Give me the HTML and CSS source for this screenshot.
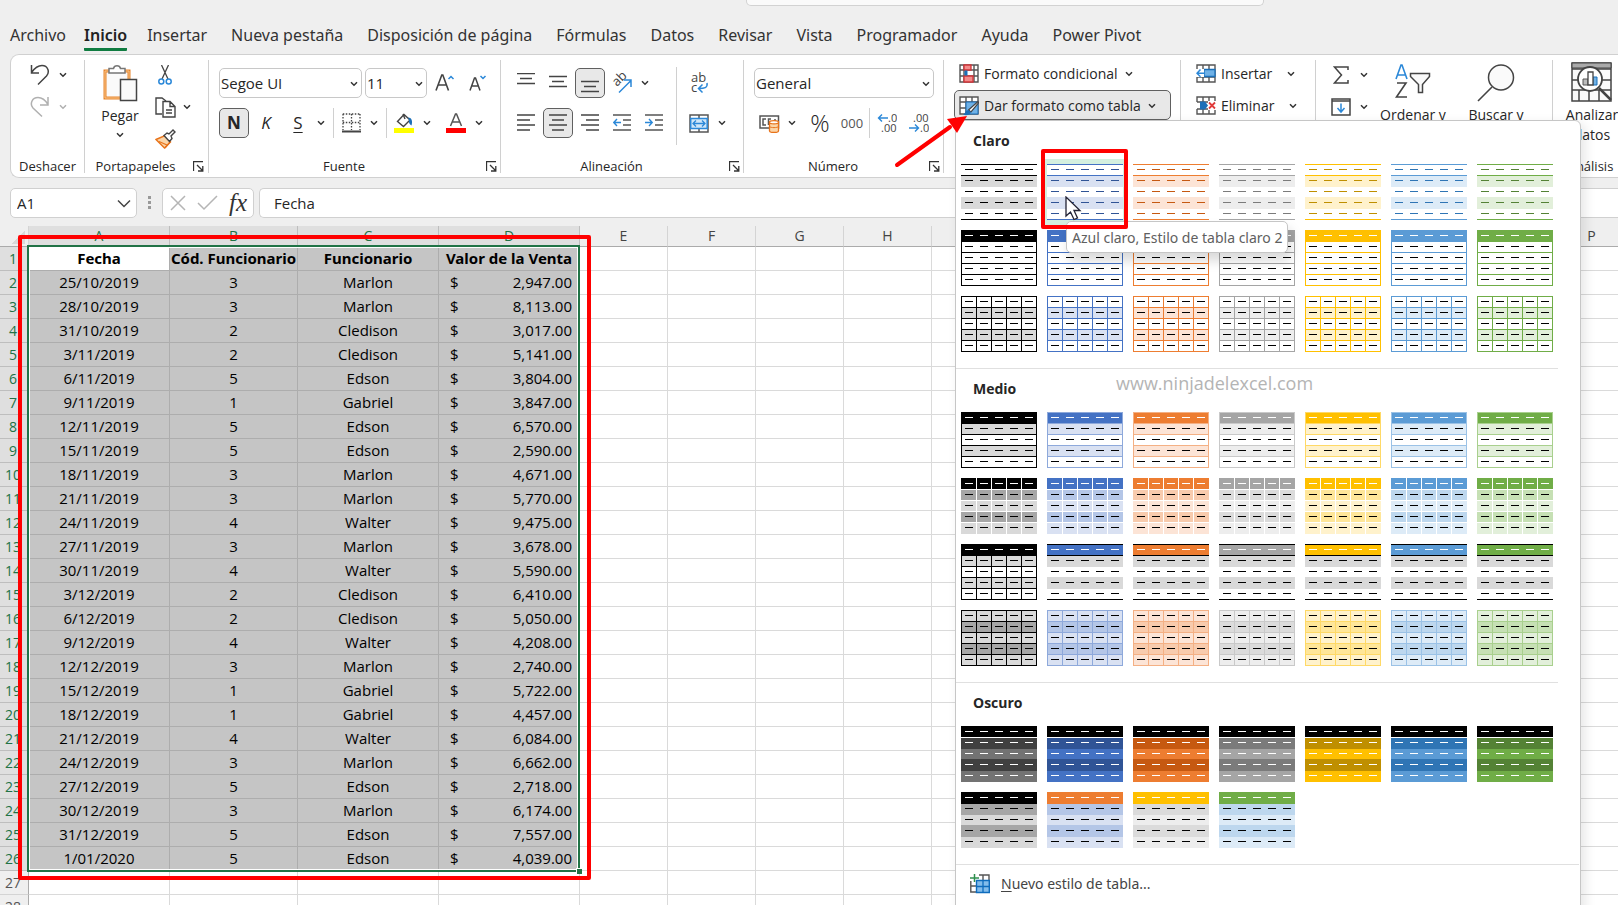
FILE: index.html
```html
<!DOCTYPE html>
<html lang="es">
<head>
<meta charset="utf-8">
<title>Excel - Dar formato como tabla</title>
<link rel="stylesheet" href="styles.css">
</head>
<body>
<svg class="defs" aria-hidden="true">
  <symbol id="chev" viewBox="0 0 8 6"><path d="M1 1.2 4 4.2 7 1.2" fill="none" stroke="currentColor" stroke-width="1.5"/></symbol>
  <symbol id="launch" viewBox="0 0 11 11"><path d="M.5 10V.5H10M4 4l5.500 5.500M9.800 5v5H5" fill="none" stroke="#333" stroke-width="1.300"/></symbol>
</svg>
<div class="app">
  <header class="titlebar"><div class="searchbox"></div></header>
  <nav class="tabs" aria-label="Cinta de opciones">
    <a class="tab tab-file" href="#">Archivo</a>
    <a class="tab is-active" href="#">Inicio</a>
    <a class="tab" href="#">Insertar</a>
    <a class="tab" href="#">Nueva pestaña</a>
    <a class="tab" href="#">Disposición de página</a>
    <a class="tab" href="#">Fórmulas</a>
    <a class="tab" href="#">Datos</a>
    <a class="tab" href="#">Revisar</a>
    <a class="tab" href="#">Vista</a>
    <a class="tab" href="#">Programador</a>
    <a class="tab" href="#">Ayuda</a>
    <a class="tab" href="#">Power Pivot</a>
  </nav>

  <div class="ribbon">
    <section class="group g-undo">
      <div class="stack">
        <div class="row"><button class="ib" aria-label="Deshacer"><svg width="20" height="22" viewBox="0 0 20 22"><path d="M1.500 1v8H9M1.500 8.500C5 3.500 9 1.500 12 1.500c6 0 8 6.500 4.500 10.500L8 20.500" fill="none" stroke="#444" stroke-width="1.500"/></svg></button><button class="cb" aria-label="Más"><svg class="chev"><use href="#chev"/></svg></button></div>
        <div class="row is-off"><button class="ib" aria-label="Rehacer"><svg width="20" height="22" viewBox="0 0 20 22"><path d="M18 1v8h-8M18 8.500C15 3.500 11 1.500 8 1.500c-6 0-8.500 6.500-5 10.500l9 8.500" fill="none" stroke="#b0b0b0" stroke-width="1.500"/></svg></button><button class="cb" aria-label="Más"><svg class="chev"><use href="#chev"/></svg></button></div>
      </div>
      <footer class="foot"><span>Deshacer</span></footer>
    </section>

    <section class="group g-clip">
      <div class="cols">
        <button class="big">
          <svg width="35" height="38" viewBox="0 0 35 38"><path d="M2 7h24v27H2z" fill="#fafafa" stroke="#e8842b" stroke-width="3"/><path d="M2 7h24v27H2z" fill="none" stroke="#f8c58a" stroke-width="1"/><path d="M6 9V4.500h4.500a3.600 3.600 0 0 1 7 0H22V9z" fill="#fff" stroke="#777" stroke-width="1.500"/><path d="M17.500 15.500h16v21h-16z" fill="#fafafa" stroke="#444" stroke-width="1.500"/></svg>
          <span>Pegar</span>
          <svg class="chev"><use href="#chev"/></svg>
        </button>
        <div class="stack tight">
          <div class="row"><button class="ib" aria-label="Cortar"><svg width="14" height="20" viewBox="0 0 14 20"><path d="M3.500 0l6.500 14M10.500 0L4 14" stroke="#444" stroke-width="1.300"/><circle cx="3.300" cy="16.500" r="2.500" fill="none" stroke="#2b88d8" stroke-width="1.500"/><circle cx="10.700" cy="16.500" r="2.500" fill="none" stroke="#2b88d8" stroke-width="1.500"/></svg></button></div>
          <div class="row"><button class="ib" aria-label="Copiar"><svg width="21" height="21" viewBox="0 0 21 21"><path d="M7 17H1V1h6l4 3" fill="none" stroke="#444" stroke-width="1.400"/><path d="M8 4.500h7l5 5V20H8zM15 4.500v5h5M11 13h6M11 16h6" fill="#fff" stroke="#444" stroke-width="1.400"/></svg></button><button class="cb" aria-label="Más"><svg class="chev"><use href="#chev"/></svg></button></div>
          <div class="row"><button class="ib" aria-label="Copiar formato"><svg width="21" height="20" viewBox="0 0 21 20"><path d="M1 10.500l9-4 5.500 6.500-6 6z" fill="#fbd5a8" stroke="#e8731a" stroke-width="1.400"/><path d="M4 12.500l8 3.500M10 19l5-6" stroke="#e8731a" stroke-width="1.200"/><path d="M9 6.500l3-2.500 2 1 4-4 2 2-4 4 1 2.500-2.500 3z" fill="#fff" stroke="#444" stroke-width="1.400"/></svg></button></div>
        </div>
      </div>
      <footer class="foot"><span>Portapapeles</span><button class="lb" aria-label="Portapapeles"><svg width="11" height="11"><use href="#launch"/></svg></button></footer>
    </section>

    <section class="group g-font">
      <div class="stack">
        <div class="row r3">
          <div class="combo c-font"><select aria-label="Fuente"><option>Segoe UI</option></select><svg class="chev"><use href="#chev"/></svg></div>
          <div class="combo c-size"><select aria-label="Tamaño"><option>11</option></select><svg class="chev"><use href="#chev"/></svg></div>
          <button class="ib" aria-label="Aumentar tamaño"><svg width="20" height="19" viewBox="0 0 20 19"><path d="M1 16.500L6.800 1h1L13.500 16.500M3 11h8.500" fill="none" stroke="#444" stroke-width="1.600"/><path d="M13.500 5l2.500-2.500L18.500 5" fill="none" stroke="#2b88d8" stroke-width="1.500"/></svg></button>
          <button class="ib" aria-label="Disminuir tamaño"><svg width="18" height="19" viewBox="0 0 18 19"><path d="M1 16.500L5.500 4h1L11 16.500M2.500 12h7" fill="none" stroke="#444" stroke-width="1.500"/><path d="M11.500 2L14 4.500 16.500 2" fill="none" stroke="#2b88d8" stroke-width="1.500"/></svg></button>
        </div>
        <div class="row r2">
          <button class="ib is-on glyph bold">N</button><button class="ib glyph ital">K</button>
          <div class="split"><button class="ib glyph under">S</button><button class="cb" aria-label="Más"><svg class="chev"><use href="#chev"/></svg></button></div>
          <i class="vs"></i>
          <div class="split"><button class="ib" aria-label="Bordes"><svg width="19" height="20" viewBox="0 0 19 20"><path d="M.8 1H18.500M.8 9.500H18.500M1 1V17M9.500 1V17M18 1V17" stroke="#444" stroke-width="1.300" stroke-dasharray="1.500 1.500"/><path d="M0 18.500h19" stroke="#444" stroke-width="2"/></svg></button><button class="cb" aria-label="Más"><svg class="chev"><use href="#chev"/></svg></button></div>
          <i class="vs"></i>
          <div class="split"><button class="ib" aria-label="Relleno"><svg width="20" height="20" viewBox="0 0 20 20"><path d="M3.500 8.500L10 1.500l6 5.500-6.500 6.500zM9 1l2 5" fill="#fff" stroke="#444" stroke-width="1.400"/><path d="M14 4.500c3.500 0 5 3.500 3.500 8-2-1-3-3-2.500-5.500z" fill="#1b6fb8"/><path d="M0 15h20v5H0z" fill="#ff0"/></svg></button><button class="cb" aria-label="Más"><svg class="chev"><use href="#chev"/></svg></button></div>
          <div class="split"><button class="ib" aria-label="Color de fuente"><svg width="20" height="20" viewBox="0 0 20 20"><path d="M4.500 13L9.500 1h1l5 12M6.500 9h7" fill="none" stroke="#555" stroke-width="1.500"/><path d="M0 15h20v5H0z" fill="red"/></svg></button><button class="cb" aria-label="Más"><svg class="chev"><use href="#chev"/></svg></button></div>
        </div>
      </div>
      <footer class="foot"><span>Fuente</span><button class="lb" aria-label="Fuente"><svg width="11" height="11"><use href="#launch"/></svg></button></footer>
    </section>

    <section class="group g-align">
      <div class="cols">
        <div class="stack">
          <div class="row r2">
            <button class="ib" aria-label="Alinear arriba"><svg width="19" height="20"><path d="M0 .5h18M3 5.500h12M0 10.500h18" stroke="#444" stroke-width="1.500"/></svg></button>
            <button class="ib" aria-label="Alinear en medio"><svg width="19" height="20"><path d="M0 3.500h18M3 8.500h12M0 13.500h18" stroke="#444" stroke-width="1.500"/></svg></button>
            <button class="ib is-on" aria-label="Alinear abajo"><svg width="19" height="20"><path d="M0 8.500h18M3 13.500h12M0 18.500h18" stroke="#444" stroke-width="1.500"/></svg></button>
            <div class="split"><button class="ib" aria-label="Orientación"><svg width="22" height="22" viewBox="0 0 22 22"><text x="0" y="0" class="svgtext" font-size="13" transform="translate(6 15) rotate(-45)">ab</text><path d="M8 20.500L19.500 9M13 8h7v7" fill="none" stroke="#2b88d8" stroke-width="1.500"/></svg></button><button class="cb" aria-label="Más"><svg class="chev"><use href="#chev"/></svg></button></div>
          </div>
          <div class="row r2">
            <button class="ib" aria-label="Izquierda"><svg width="18" height="20"><path d="M0 2h18M0 7h13M0 12h18M0 17h13" stroke="#444" stroke-width="1.400"/></svg></button>
            <button class="ib is-on" aria-label="Centrar"><svg width="18" height="20"><path d="M0 2h18M3 7h12M0 12h18M3 17h12" stroke="#444" stroke-width="1.400"/></svg></button>
            <button class="ib" aria-label="Derecha"><svg width="18" height="20"><path d="M0 2h18M5 7h13M0 12h18M5 17h13" stroke="#444" stroke-width="1.400"/></svg></button>
            <button class="ib" aria-label="Disminuir sangría"><svg width="18" height="20"><path d="M0 2h18M10 7h8M10 12h8M0 17h18" stroke="#555" stroke-width="1.400"/><path d="M8 9.500H1M4 6L.8 9.500 4 13" fill="none" stroke="#2b88d8" stroke-width="1.400"/></svg></button>
            <button class="ib" aria-label="Aumentar sangría"><svg width="18" height="20"><path d="M0 2h18M10 7h8M10 12h8M0 17h18" stroke="#555" stroke-width="1.400"/><path d="M0 9.500h7M4 6l3.200 3.500L4 13" fill="none" stroke="#2b88d8" stroke-width="1.400"/></svg></button>
          </div>
        </div>
        <i class="vs tall"></i>
        <div class="stack">
          <div class="row"><button class="ib" aria-label="Ajustar texto"><svg width="20" height="22" viewBox="0 0 20 22"><text x="2" y="10" class="svgtext" font-size="13">ab</text><text x="2" y="20" class="svgtext" font-size="13">c</text><path d="M18 11c1 5-3 5.500-8 5.500M13.500 12.500l-4 4 4 4" fill="none" stroke="#2b88d8" stroke-width="1.500"/></svg></button></div>
          <div class="row"><button class="ib" aria-label="Combinar y centrar"><svg width="20" height="19" viewBox="0 0 20 19"><path d="M1 1h18v17H1zM10 1v17" fill="#fff" stroke="#555" stroke-width="1.500"/><path d="M1.700 4.500h16.500v10H1.700z" fill="#cfe6f8" stroke="#2b88d8" stroke-width="1.500"/><path d="M4 9.500h12M7 6.500l-3 3 3 3M13 6.500l3 3-3 3" fill="none" stroke="#2b88d8" stroke-width="1.300"/></svg></button><button class="cb" aria-label="Más"><svg class="chev"><use href="#chev"/></svg></button></div>
        </div>
      </div>
      <footer class="foot"><span>Alineación</span><button class="lb" aria-label="Alineación"><svg width="11" height="11"><use href="#launch"/></svg></button></footer>
    </section>

    <section class="group g-num">
      <div class="stack">
        <div class="row"><div class="combo c-num"><select aria-label="Formato de número"><option>General</option></select><svg class="chev"><use href="#chev"/></svg></div></div>
        <div class="row r2">
          <div class="split"><button class="ib" aria-label="Moneda"><svg width="21" height="20" viewBox="0 0 21 20"><path d="M1 3h18.500v12H1z" fill="#fff" stroke="#555" stroke-width="1.500"/><path d="M7 6H4v6h3M12 6H9.500v6M16 6v2" fill="none" stroke="#555" stroke-width="1.500"/><path d="M10.500 9v9c0 2 9 2 9 0V9z" fill="#fbd5a8" stroke="#e8731a" stroke-width="1.300"/><ellipse cx="15" cy="9.300" rx="4.500" ry="1.600" fill="#fff" stroke="#e8731a" stroke-width="1.300"/><path d="M10.500 13.500c1 1.500 8 1.500 9 0" fill="none" stroke="#e8731a"/></svg></button><button class="cb" aria-label="Más"><svg class="chev"><use href="#chev"/></svg></button></div>
          <button class="ib pct">%</button><button class="ib zeros">000</button>
          <i class="vs slim"></i>
          <button class="ib" aria-label="Aumentar decimales"><svg width="20" height="22" viewBox="0 0 20 22"><text x="11" y="10" class="svgtext" font-size="11">.0</text><text x="4" y="20" class="svgtext" font-size="11">.00</text><path d="M11 6H1.500M5 2.500L1.500 6 5 9.500" fill="none" stroke="#2b88d8" stroke-width="1.400"/></svg></button>
          <button class="ib" aria-label="Disminuir decimales"><svg width="20" height="22" viewBox="0 0 20 22"><text x="4" y="10" class="svgtext" font-size="11">.00</text><text x="11" y="20" class="svgtext" font-size="11">.0</text><path d="M0 16h9.500M6 12.500l3.500 3.500L6 19.500" fill="none" stroke="#2b88d8" stroke-width="1.400"/></svg></button>
        </div>
      </div>
      <footer class="foot"><span>Número</span><button class="lb" aria-label="Número"><svg width="11" height="11"><use href="#launch"/></svg></button></footer>
    </section>

    <section class="group g-styles">
      <div class="stack cmds">
        <button class="cmd"><svg width="20" height="20" viewBox="0 0 20 20"><path d="M1 1h18v17H1zM1 6h18M1 12h18M15 1v17M5 1v17" fill="#fff" stroke="#555" stroke-width="1.400"/><path d="M5 1h7v5H5zM5 12h9v6H5z" fill="#f28b8b" stroke="#d13438" stroke-width="1.300"/><path d="M5.500 6.500h3v5h-3z" fill="#1b6fb8"/></svg><span>Formato condicional</span><svg class="chev"><use href="#chev"/></svg></button>
        <button class="cmd is-on" aria-expanded="true"><svg width="20" height="20" viewBox="0 0 20 20"><path d="M1 1h18v17H1zM1 6h18M1 12h18M13 1v17M7 1v17" fill="#fff" stroke="#555" stroke-width="1.400"/><path d="M7 6h12v12H7z" fill="#6fb1e6" stroke="#1b6fb8"/><path d="M19 5.500L9.500 14l2.500 2 7.500-9z" fill="#fff" stroke="#444" stroke-width="1.200"/><path d="M9.500 14c-3 0-2.500 3-5.500 4.500 3 1.500 7.500.5 8-2.500z" fill="#1b6fb8"/></svg><span>Dar formato como tabla</span><svg class="chev"><use href="#chev"/></svg></button>
      </div>

      <div class="menu" role="menu">
        <section class="cat"><h2>Claro</h2><div class="thumbs" data-styles="light1 light2 light3"></div></section>
        <section class="cat"><h2>Medio</h2><div class="thumbs" data-styles="med1 med2 med3 med4"></div></section>
        <section class="cat cat-last"><h2>Oscuro</h2><div class="thumbs" data-styles="dark1 dark2"></div></section>
        <button class="new-style" role="menuitem"><svg width="20" height="20" viewBox="0 0 20 20"><path d="M.8 7v11H19V1H9M.8 12H19M7 6v12M13 1v17" fill="none" stroke="#555" stroke-width="1.400"/><path d="M6.500 6.500h12.800v12H6.500z" fill="#83bceb" stroke="#0f6cbd" stroke-width="1.400"/><path d="M13 6.500v12M6.500 12.500h13" stroke="#0f6cbd" stroke-width="1.300"/><path d="M0 4h9M4.500 0v8" stroke="#2f8f4e" stroke-width="1.500"/></svg><span><u>N</u>uevo estilo de tabla...</span></button>
        <div class="watermark">www.ninjadelexcel.com</div>
        <div class="tip" role="tooltip">Azul claro, Estilo de tabla claro 2</div>
        <div class="mark mark-style"></div>
        <svg class="cursor" width="17" height="25" viewBox="0 0 17 25"><path d="M1 1v19l4.500-4 3.500 7.500 3.500-1.500-3.500-7.500h6z" fill="#fff" stroke="#223" stroke-width="1.300"/></svg>
      </div>
      <svg class="arrow" width="76" height="54" viewBox="0 0 76 54"><path d="M3 51L56 13" stroke="red" stroke-width="4" stroke-linecap="round"/><path d="M73 2L63 19 53 5z" fill="red"/></svg>
    </section>

    <section class="group g-cells">
      <div class="stack cmds">
        <button class="cmd wide"><svg width="20" height="20" viewBox="0 0 20 20"><path d="M1 1h18v17H1zM1 6h18M1 13h18M13 1v17M7 1v17" fill="#fff" stroke="#555" stroke-width="1.400"/><path d="M8 5.500h11v7H8z" fill="#6fb1e6" stroke="#1b6fb8" stroke-width="1.300"/><path d="M0 5h8v8H0z" fill="#fff"/><path d="M9 9.300H1M4.500 5.500L1 9.300l3.500 3.500" fill="none" stroke="#2b88d8" stroke-width="1.500"/></svg><span>Insertar</span><svg class="chev"><use href="#chev"/></svg></button>
        <button class="cmd wide"><svg width="20" height="20" viewBox="0 0 20 20"><path d="M1 6V1h18v5M7 1v5M13 1v5M1 6h18M1 13v5h18v-5M7 13v5M13 13v5M1 13h18" fill="none" stroke="#555" stroke-width="1.400"/><path d="M4 5.500h5l3 4-3 4H4z" fill="#1b6fb8"/><path d="M12 5h8v9h-8z" fill="#fff"/><path d="M13 6.500l6 6M19 6.500l-6 6" stroke="#e03a3a" stroke-width="1.800"/></svg><span>Eliminar</span><svg class="chev"><use href="#chev"/></svg></button>
      </div>
    </section>

    <section class="group g-edit">
      <div class="cols">
        <div class="stack cmds2">
          <div class="row"><button class="ib" aria-label="Autosuma"><svg width="17" height="18" viewBox="0 0 17 18"><path d="M15 4V1H1.500l7 8-7 8H15v-3" fill="none" stroke="#444" stroke-width="1.500"/></svg></button><button class="cb" aria-label="Más"><svg class="chev"><use href="#chev"/></svg></button></div>
          <div class="row"><button class="ib" aria-label="Rellenar"><svg width="20" height="18" viewBox="0 0 20 18"><path d="M1 1h18v16H1zM1 3h18" fill="#fff" stroke="#444" stroke-width="1.500"/><path d="M10 5.500v8M6.500 10l3.500 4 3.500-4" fill="none" stroke="#2b88d8" stroke-width="1.500"/></svg></button><button class="cb" aria-label="Más"><svg class="chev"><use href="#chev"/></svg></button></div>
        </div>
        <button class="big b-sort"><svg width="38" height="36" viewBox="0 0 38 36"><path d="M2 15L7 1h1l5 14M3.500 11h8" fill="none" stroke="#2b88d8" stroke-width="1.600"/><path d="M3 19h9L2.500 33H13" fill="none" stroke="#444" stroke-width="1.600"/><path d="M16.500 9.500h19v3l-7 8v8h-4v-8l-8-8z" fill="#fafafa" stroke="#444" stroke-width="1.500"/></svg><span>Ordenar y</span></button>
        <button class="big b-find"><svg width="38" height="38" viewBox="0 0 38 38"><circle cx="24" cy="13.500" r="12.500" fill="#fafafa" stroke="#444" stroke-width="1.500"/><path d="M15 23L1 37" stroke="#444" stroke-width="1.600"/></svg><span>Buscar y</span></button>
      </div>
    </section>

    <section class="group g-analysis">
      <button class="big b-an"><svg width="42" height="40" viewBox="0 0 42 40"><path d="M1 1h39v38H1zM1 7h39M1 18h39M1 28h39M8 28v11M18 28v11M28 28v11" fill="#fafafa" stroke="#444" stroke-width="1.500"/><path d="M1 1h39v5H1z" fill="#aaa" stroke="#444"/><circle cx="19" cy="17" r="12" fill="#fff" stroke="#444" stroke-width="1.800"/><path d="M12 17h5v6h-5z" fill="#bbb" stroke="#555"/><path d="M22 15h4v8h-4z" fill="#6fb1e6" stroke="#1b6fb8"/><path d="M17 10h5v13h-5z" fill="#fff" stroke="#444" stroke-width="1.300"/><path d="M28 26l12 12" stroke="#444" stroke-width="2.500"/></svg><span>Analizar<br>datos</span></button>
      <footer class="foot"><span>Análisis</span></footer>
    </section>
  </div>

  <div class="formula">
    <div class="namebox"><input aria-label="Cuadro de nombres" value="A1"><svg width="14" height="9" viewBox="0 0 14 9"><path d="M1 1.500l6 6 6-6" fill="none" stroke="#444" stroke-width="1.500"/></svg></div>
    <svg class="dots" width="4" height="14"><path d="M0 0h3v3H0zM0 5h3v3H0zM0 10h3v3H0z" fill="#999"/></svg>
    <div class="fxbox">
      <button aria-label="Cancelar"><svg width="16" height="16"><path d="M1 1l14 14M15 1L1 15" stroke="#b5b5b5" stroke-width="1.500"/></svg></button>
      <button aria-label="Introducir"><svg width="21" height="16"><path d="M1 8l6 6L20 1" fill="none" stroke="#b5b5b5" stroke-width="1.500"/></svg></button>
      <button class="fx">fx</button>
    </div>
    <input class="fbar" aria-label="Barra de fórmulas" value="Fecha">
  </div>

  <main class="sheet">
    <table class="cells">
      <colgroup id="cols"></colgroup>
      <thead><tr id="letters"></tr></thead>
      <tbody id="rows"></tbody>
    </table>
    <div class="selection"><i></i></div>
    <div class="mark mark-data"></div>
  </main>
</div>
<script src="script.js"></script>
</body>
</html>
```
FILE: styles.css
```css
* { box-sizing: border-box; }
body { margin: 0; background: #efefef; color: #262626; font: 14px/20px "Open Sans", "Noto Sans", sans-serif; }
button, input, select { font: inherit; color: inherit; background: none; border: 0; padding: 0; margin: 0; }
svg { display: block; flex: none; }
.defs { position: absolute; width: 0; height: 0; }
.app { height: 100vh; display: flex; flex-direction: column; overflow: hidden; }

/* Title bar and tabs */
.titlebar { height: 6px; flex: none; display: flex; justify-content: center; padding-left: 392px; }
.searchbox { width: 518px; background: #fafafa; border: 1px solid #d2d2d2; border-top: 0; border-radius: 0 0 5px 5px; }
.tabs { flex: none; height: 48px; display: flex; gap: 24px; padding: 15px 10px 0; font-family: "Noto Sans", "Open Sans", sans-serif; font-size: 16px; line-height: 28px; white-space: nowrap; }
.tab { height: 31px; color: #333; text-decoration: none; }
.tab-file { margin-right: -6px; }
.tab.is-active { font-weight: 600; color: #222; height: 30px; margin-right: -4px; border-bottom: 3px solid #107c41; border-radius: 1px; }

/* Ribbon */
.ribbon { flex: none; height: 124px; margin-left: 10px; display: flex; background: #fff; border: 1px solid #d0d0d0; border-right: 0; border-radius: 9px 0 0 9px; padding: 5px 0 4px; }
.group { flex: none; display: flex; flex-direction: column; border-right: 1px solid #d0d0d0; }
.g-undo { width: 74px; }
.g-clip { width: 124px; }
.g-font { width: 292px; }
.g-align { width: 243px; }
.g-num { width: 200px; }
.g-styles { width: 237px; position: relative; }
.g-cells { width: 135px; }
.g-edit { width: 237px; }
.g-analysis { flex: 1 0 66px; border-right: 0; }
.foot { margin-top: auto; display: flex; align-items: center; justify-content: center; font-size: 13px; line-height: 14px; padding: 0 3px; }
.foot span { flex: 1; text-align: center; }
.foot span:not(:last-child) { padding-right: 10px; }
.lb { width: 11px; }
.g-clip .lb { width: 12px; }
.stack { display: flex; flex-direction: column; gap: 10px; padding: 8px 0 0 10px; }
.cols { display: flex; }
.row { display: flex; align-items: center; height: 30px; }
.r2 { gap: 2px; }
.r3 { gap: 3px; }
.split { display: flex; }
.r2 .split + .split { margin-left: 4px; }
.g-num .split { margin-right: 3px; }
.ib { width: 30px; height: 30px; display: flex; align-items: center; justify-content: center; border-radius: 5px; }
.ib.is-on, .cmd.is-on { background: #e8e8e8; border: 1px solid #606060; }
.cb { width: 16px; height: 30px; display: flex; align-items: center; justify-content: center; }
.chev { width: 8px; height: 6px; color: #333; }
.is-off .chev { color: #b0b0b0; }
.vs { width: 1px; height: 30px; background: #d0d0d0; margin: 0 0 0 2px; }
.vs.slim { margin: 0; }
.vs.tall { height: 78px; margin: 7px 0 0 7px; }
.g-undo .stack { padding: 0 0 0 14px; gap: 2px; }
.stack.tight { padding: 0; gap: 2px; }
.tight .cb { width: 14px; }
.big { display: flex; flex-direction: column; align-items: center; padding-top: 4px; line-height: 20px; }
.g-clip .big { width: 60px; margin-left: 5px; }
.g-clip .big span { margin: 4px 0 6px; }
.combo { position: relative; height: 30px; border: 1px solid #c8c8c8; border-radius: 5px; }
.combo select { appearance: none; width: 100%; height: 28px; padding-left: 1px; font-size: 15px; }
.combo .chev { position: absolute; right: 3px; top: 12px; pointer-events: none; }
.c-font { width: 143px; }
.c-size { width: 62px; }
.c-num { width: 180px; }
.glyph { font-size: 17px; }
.bold { font-weight: 700; }
.ital { font-style: italic; }
.under { text-decoration: underline; text-underline-offset: 3px; }
.pct { font-size: 24px; font-weight: 300; }
.zeros { font-size: 13px; color: #555; }
.svgtext { font-family: "Open Sans", "Noto Sans", sans-serif; fill: #444; }
.g-align .vs + .stack { padding-left: 7px; }
.stack.cmds { padding: 0 0 0 10px; gap: 2px; align-items: flex-start; }
.cmd { height: 28px; display: flex; align-items: center; gap: 5px; padding: 0 5px; border-radius: 5px; white-space: nowrap; }
.cmd.is-on { height: 30px; width: 217px; padding: 1px 4px 0; }
.cmd .chev { margin-left: 2px; }
.g-cells .stack.cmds { gap: 4px; }
.cmd.wide .chev { margin-left: 10px; }
.stack.cmds2 { padding: 0 0 0 10px; gap: 2px; }
.b-sort { margin-left: 8px; width: 66px; }
.b-find { margin-left: 17px; width: 66px; }
.b-sort span { margin-top: 5px; white-space: nowrap; }
.b-find span { margin-top: 3px; white-space: nowrap; }
.b-an { width: 66px; padding-top: 2px; text-align: center; margin-left: 6px; }
.b-an span { margin-top: 3px; }
.g-analysis .foot { padding-left: 6px; }

/* Table style menu */
.menu { position: absolute; z-index: 5; left: 11px; top: 60px; width: 626px; height: 820px; background: #fff; border: 1px solid #c6c6c6; border-radius: 6px; box-shadow: 4px 4px 12px rgba(0, 0, 0, .1); }
.cat { margin-right: 22px; padding: 10px 0 16px 5px; border-bottom: 1px solid #e0e0e0; }
.cat-last { margin-right: 1px; }
.cat h2 { margin: 0 0 13px 12px; font-size: 14px; line-height: 20px; font-weight: 700; }
.thumbs { display: grid; grid-template-columns: repeat(7, 76px); gap: 10px; }
.thumb { width: 76px; height: 56px; background: #fff; }
.thumb.is-hover { box-shadow: 0 0 0 5px #d3efdf; }
.new-style { display: flex; align-items: center; gap: 11px; height: 37px; padding-left: 14px; font-family: "Noto Sans", "Open Sans", sans-serif; font-size: 14px; color: #444; }
.new-style u { text-underline-offset: 2px; }
.watermark { position: absolute; left: 160px; top: 250px; font-size: 18px; line-height: 24px; color: #b4b4b4; }
.tip { position: absolute; left: 110px; top: 100px; height: 32px; padding: 0 5px; background: #fff; border: 1px solid #c6c6c6; border-radius: 5px; box-shadow: 3px 8px 12px rgba(0, 0, 0, .15); font-family: "Noto Sans", "Open Sans", sans-serif; font-size: 14px; line-height: 32px; color: #606060; white-space: nowrap; }
.mark { position: absolute; border: 4px solid red; border-radius: 2px; pointer-events: none; }
.mark-style { left: 85px; top: 28px; width: 87px; height: 80px; }
.cursor { position: absolute; left: 109px; top: 75px; }
.arrow { position: absolute; z-index: 6; left: -50px; top: 54px; }

/* Formula bar */
.formula { flex: none; display: flex; align-items: center; height: 30px; margin: 10px 0 8px 10px; font-size: 15px; }
.namebox, .fxbox, .fbar { height: 30px; background: #fff; border: 1px solid #d0d0d0; border-radius: 5px; }
.namebox { width: 127px; display: flex; align-items: center; padding: 0 5px 0 6px; }
.namebox input { flex: 1; min-width: 0; }
.dots { margin: 0 10px 0 11px; }
.fxbox { width: 92px; display: flex; align-items: center; justify-content: space-between; padding: 0 6px 0 7px; }
.fx { font: italic 25px/24px "Liberation Serif", serif; color: #333; }
.fbar { flex: 1; margin-left: 5px; padding-left: 14px; border-right: 0; border-radius: 5px 0 0 5px; }

/* Sheet */
.sheet { position: relative; flex: 1; min-height: 0; background: #fff; }
.cells { table-layout: fixed; border-collapse: separate; border-spacing: 0; width: 0; font-size: 15px; line-height: 23px; color: #000; }
.w-head { width: 29px; }
.w-a { width: 141px; }
.w-b { width: 128px; }
.w-std { width: 88px; }
.cells th, .cells td { height: 24px; padding: 0; border: 0 solid #dadada; border-width: 0 1px 1px 0; text-align: center; white-space: nowrap; }
.cells thead th { height: 21px; line-height: 20px; background: #efefef; font-weight: 400; color: #444; font-size: 14px; border-color: #d4d4d4 #d4d4d4 #ababab; }
.cells tbody th { background: #efefef; font-weight: 400; color: #555; font-size: 14px; border-color: #d4d4d4 #ababab; padding-right: 2px; }
.cells thead th.sel, .cells tbody th.sel { background: #dfdfdf; color: #217346; border-color: #bebebe; }
.cells td.sel { background: #c5c5c5; border-color: #adadad; }
.cells td.active { background: #fff; }
.cells td.title { font-family: "Noto Sans", "Open Sans", sans-serif; font-weight: 700; }
.cells .money { display: flex; justify-content: space-between; padding: 0 7px 0 11px; }
.corner::after { content: ""; display: block; width: 13px; height: 13px; margin: 3px 0 0 12px; background: linear-gradient(135deg, transparent 50%, #d8d8d8 50%); }
.selection { position: absolute; left: 27px; top: 19px; width: 553px; height: 627px; border: 2px solid #217346; box-shadow: inset 0 0 0 1px #fff; }
.selection i { position: absolute; right: -4px; bottom: -4px; width: 6px; height: 6px; background: #217346; border: 1px solid #fff; border-width: 1px 0 0 1px; }
.mark-data { left: 18px; top: 9px; width: 573px; height: 645px; }
```
FILE: script.js
```js
// Sales rows: date, employee code, employee, amount
const sales = [
  ["25/10/2019", 3, "Marlon", "2,947.00"], ["28/10/2019", 3, "Marlon", "8,113.00"],
  ["31/10/2019", 2, "Cledison", "3,017.00"], ["3/11/2019", 2, "Cledison", "5,141.00"],
  ["6/11/2019", 5, "Edson", "3,804.00"], ["9/11/2019", 1, "Gabriel", "3,847.00"],
  ["12/11/2019", 5, "Edson", "6,570.00"], ["15/11/2019", 5, "Edson", "2,590.00"],
  ["18/11/2019", 3, "Marlon", "4,671.00"], ["21/11/2019", 3, "Marlon", "5,770.00"],
  ["24/11/2019", 4, "Walter", "9,475.00"], ["27/11/2019", 3, "Marlon", "3,678.00"],
  ["30/11/2019", 4, "Walter", "5,590.00"], ["3/12/2019", 2, "Cledison", "6,410.00"],
  ["6/12/2019", 2, "Cledison", "5,050.00"], ["9/12/2019", 4, "Walter", "4,208.00"],
  ["12/12/2019", 3, "Marlon", "2,740.00"], ["15/12/2019", 1, "Gabriel", "5,722.00"],
  ["18/12/2019", 1, "Gabriel", "4,457.00"], ["21/12/2019", 4, "Walter", "6,084.00"],
  ["24/12/2019", 3, "Marlon", "6,662.00"], ["27/12/2019", 5, "Edson", "2,718.00"],
  ["30/12/2019", 3, "Marlon", "6,174.00"], ["31/12/2019", 5, "Edson", "7,557.00"],
  ["1/01/2020", 5, "Edson", "4,039.00"]
];
const titles = ["Fecha", "Cód. Funcionario", "Funcionario", "Valor de la Venta"];
const letters = "ABCDEFGHIJKLMNOPQRSTUVWXYZ".split("");

document.getElementById("cols").innerHTML =
  '<col class="w-head">' + letters.map((l, i) =>
    `<col class="${i === 1 ? "w-b" : i < 4 ? "w-a" : "w-std"}">`).join("");
document.getElementById("letters").innerHTML =
  '<th class="corner"></th>' + letters.map((l, i) => `<th class="${i < 4 ? "sel" : ""}">${l}</th>`).join("");

let body = "";
for (let r = 1; r <= 40; r++) {
  const inRange = r <= 26;
  body += `<tr><th class="${inRange ? "sel" : ""}">${r}</th>`;
  letters.forEach((l, c) => {
    if (c > 3 || !inRange) { body += "<td></td>"; return; }
    if (r === 1) { body += `<td class="sel title${c === 0 ? " active" : ""}">${titles[c]}</td>`; return; }
    const v = sales[r - 2][c];
    body += `<td class="sel">${c === 3 ? `<div class="money"><span>$</span><span>${v}</span></div>` : v}</td>`;
  });
  body += "</tr>";
}
document.getElementById("rows").innerHTML = body;

// Theme colours: base, 80% tint, 60% tint, 40% tint, shade
const themes = [
  ["#000", "#d9d9d9", "#a6a6a6", "#000", "#404040"],
  ["#4472c4", "#d9e1f2", "#b4c6e7", "#8ea9db", "#305496"],
  ["#ed7d31", "#fce4d6", "#f8cbad", "#f4b084", "#c65911"],
  ["#a5a5a5", "#ededed", "#dbdbdb", "#c9c9c9", "#7b7b7b"],
  ["#ffc000", "#fff2cc", "#ffe699", "#ffd966", "#bf8f00"],
  ["#5b9bd5", "#ddebf7", "#bdd7ee", "#9bc2e6", "#2f75b5"],
  ["#70ad47", "#e2efda", "#c6e0b4", "#a9d08e", "#548235"]
];
const ys = [0, 11, 22, 33, 44, 55];
const rect = (x, y, w, h, f) => `<path d="M${x} ${y}h${w}v${h}h${-w}z" fill="${f}"/>`;
const hline = (list, f) => list.map(y => rect(0, y, 76, 1, f)).join("");
const vline = (list, f) => list.map(x => rect(x, 0, 1, 56, f)).join("");
const bands = list => list.map((f, i) => f ? rect(0, [0, 12, 23, 33, 45][i], 76, [12, 11, 10, 12, 11][i], f) : "").join("");
const dashes = (head, rest) => ys.slice(0, 5).map((y, i) =>
  [4, 19, 34, 49, 64].map(x => rect(x, y + 5, 8, 1, i ? rest : head)).join("")).join("");
const all = [0, 15, 30, 45, 60, 75];
const inner = [15, 30, 45, 60];

const draw = {
  light1: t => { const d = t[0] === "#000" ? t[0] : t[4];
    return bands([0, t[1], 0, t[1], 0]) + hline([0, 11, 55], t[0]) + dashes(d, d); },
  light2: t => bands([t[0]]) + hline(ys, t[0]) + vline([0, 75], t[0]) + dashes("#fff", "#000"),
  light3: t => bands([0, t[1], 0, t[1], 0]) + hline(ys, t[0]) + vline(all, t[0]) + dashes("#000", "#000"),
  med1: t => bands([t[0], t[1], 0, t[1], 0]) + hline(ys, t[3]) + vline([0, 75], t[3]) + dashes("#fff", "#000"),
  med2: t => bands([t[0], t[2], t[1], t[2], t[1]]) + hline([11, 22, 33, 44], "#fff") + vline(inner, "#fff") + dashes("#fff", "#000"),
  med3: t => bands([t[0], "#d9d9d9", 0, "#d9d9d9", 0]) +
    (t[0] === "#000" ? hline(ys, "#000") + vline(all, "#000") : hline([0, 11, 55], "#000")) + dashes("#fff", "#000"),
  med4: t => bands([t[1], t[2], t[1], t[2], t[1]]) + hline(ys, t[3]) + vline(all, t[3]) + dashes("#000", "#000"),
  dark1: t => { const b = t[0] === "#000" ? "#737373" : t[0];
    return bands(["#000", t[4], b, t[4], b]) + hline([11], "#fff") + dashes("#fff", "#fff"); },
  dark2: t => bands([t[5] || t[0], t[2], t[1], t[2], t[1]]) + dashes("#fff", "#000")
};
const mixed = [themes[0], [...themes[1], "#ed7d31"], [...themes[3], "#ffc000"], [...themes[5], "#70ad47"]];

document.querySelectorAll(".thumbs").forEach(box => {
  box.innerHTML = box.dataset.styles.split(" ").map(name =>
    (name === "dark2" ? mixed : themes).map((t, i) =>
      `<button class="thumb${name === "light1" && i === 1 ? " is-hover" : ""}" aria-label="${name} ${i + 1}"><svg width="76" height="56" shape-rendering="crispEdges">${draw[name](t)}</svg></button>`
    ).join("")).join("");
});
```
